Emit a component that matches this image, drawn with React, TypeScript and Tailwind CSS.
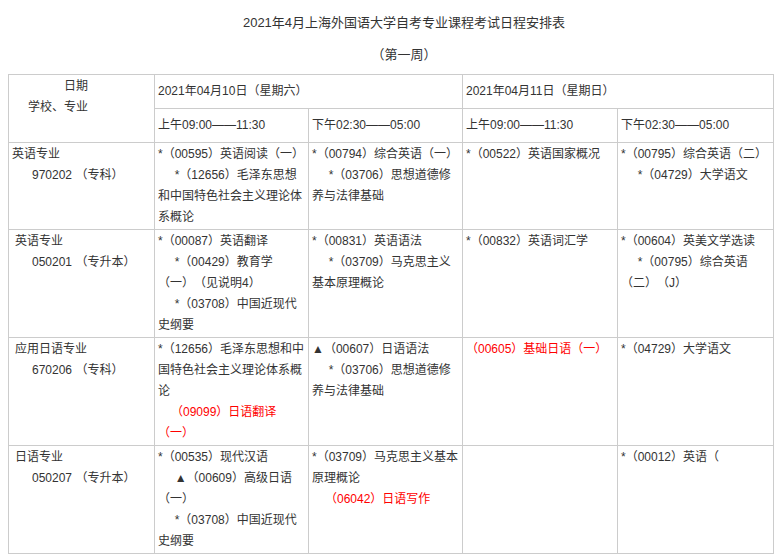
const cell = "border border-[#cccccc] px-[3px] py-[1px] align-top";
const head = "border border-[#cccccc] px-[3px] align-middle";

type Item = { t: string; red?: boolean; indent?: "n" | "r" };

const Course = ({ items }: { items: Item[] }) => (
  <>
    {items.map((it, k) => (
      <div
        key={k}
        className={`${it.indent === "n" ? "indent-[16.7px]" : it.indent === "r" ? "indent-[13px]" : ""} ${
          it.red ? "text-[#ff0000]" : ""
        }`}
      >
        {it.t}
      </div>
    ))}
  </>
);

const Major = ({ name, code, kind, lead }: { name: string; code: string; kind: string; lead?: boolean }) => (
  <>
    <div className={lead ? "pl-[3px]" : ""}>{name}</div>
    <div className="pl-[20px]">
      {code} {kind}
    </div>
  </>
);

const rows: { major: { name: string; code: string; kind: string; lead?: boolean }; cols: Item[][] }[] = [
  {
    major: { name: "英语专业", code: "970202", kind: "（专科）" },
    cols: [
      [{ t: "*（00595）英语阅读（一）" }, { t: "*（12656）毛泽东思想和中国特色社会主义理论体系概论", indent: "n" }],
      [{ t: "*（00794）综合英语（一）" }, { t: "*（03706）思想道德修养与法律基础", indent: "n" }],
      [{ t: "*（00522）英语国家概况" }],
      [{ t: "*（00795）综合英语（二）" }, { t: "*（04729）大学语文", indent: "n" }],
    ],
  },
  {
    major: { name: "英语专业", code: "050201", kind: "（专升本）", lead: true },
    cols: [
      [
        { t: "*（00087）英语翻译" },
        { t: "*（00429）教育学（一）（见说明4）", indent: "n" },
        { t: "*（03708）中国近现代史纲要", indent: "n" },
      ],
      [{ t: "*（00831）英语语法" }, { t: "*（03709）马克思主义基本原理概论", indent: "n" }],
      [{ t: "*（00832）英语词汇学" }],
      [{ t: "*（00604）英美文学选读" }, { t: "*（00795）综合英语（二）（J）", indent: "n" }],
    ],
  },
  {
    major: { name: "应用日语专业", code: "670206", kind: "（专科）", lead: true },
    cols: [
      [{ t: "*（12656）毛泽东思想和中国特色社会主义理论体系概论" }, { t: "（09099）日语翻译（一）", indent: "r", red: true }],
      [{ t: "▲（00607）日语语法" }, { t: "*（03706）思想道德修养与法律基础", indent: "n" }],
      [{ t: "（00605）基础日语（一）", red: true }],
      [{ t: "*（04729）大学语文" }],
    ],
  },
  {
    major: { name: "日语专业", code: "050207", kind: "（专升本）", lead: true },
    cols: [
      [
        { t: "*（00535）现代汉语" },
        { t: "▲（00609）高级日语（一）", indent: "n" },
        { t: "*（03708）中国近现代史纲要", indent: "n" },
      ],
      [{ t: "*（03709）马克思主义基本原理概论" }, { t: "（06042）日语写作", indent: "r", red: true }],
      [],
      [{ t: "*（00012）英语（" }],
    ],
  },
];

export default function App() {
  return (
    <div
      className="w-[780px] h-[559px] bg-white text-[#333333] overflow-hidden [text-spacing-trim:space-all]"
      style={{ fontFamily: '"Liberation Sans", "Noto Sans CJK SC", sans-serif' }}
    >
      <div className="pt-[12px] pl-[28px] text-center text-[13px] leading-[21px]">
        <p>2021年4月上海外国语大学自考专业课程考试日程安排表</p>
        <p className="mt-[11px]">（第一周）</p>
      </div>
      <table className="mt-[9px] ml-[8px] w-[765px] table-fixed border-collapse text-[12px] leading-[21px]">
        <colgroup>
          <col className="w-[146px]" />
          <col className="w-[154px]" />
          <col className="w-[154px]" />
          <col className="w-[155px]" />
          <col className="w-[156px]" />
        </colgroup>
        <tbody>
          <tr className="h-[34px]">
            <td rowSpan={2} className={`${cell}`}>
              <div className="ml-[16px] inline-block text-right">
                <div>日期</div>
                <div>学校、专业</div>
              </div>
            </td>
            <td colSpan={2} className={head}>
              2021年04月10日（星期六）
            </td>
            <td colSpan={2} className={head}>
              2021年04月11日（星期日）
            </td>
          </tr>
          <tr className="h-[34px]">
            <td className={head}>上午09:00——11:30</td>
            <td className={head}>下午02:30——05:00</td>
            <td className={head}>上午09:00——11:30</td>
            <td className={head}>下午02:30——05:00</td>
          </tr>
          {rows.map((r, k) => (
            <tr key={k}>
              <td className={cell}>
                <Major {...r.major} />
              </td>
              {r.cols.map((c, j) => (
                <td key={j} className={cell}>
                  <Course items={c} />
                </td>
              ))}
            </tr>
          ))}
        </tbody>
      </table>
    </div>
  );
}
